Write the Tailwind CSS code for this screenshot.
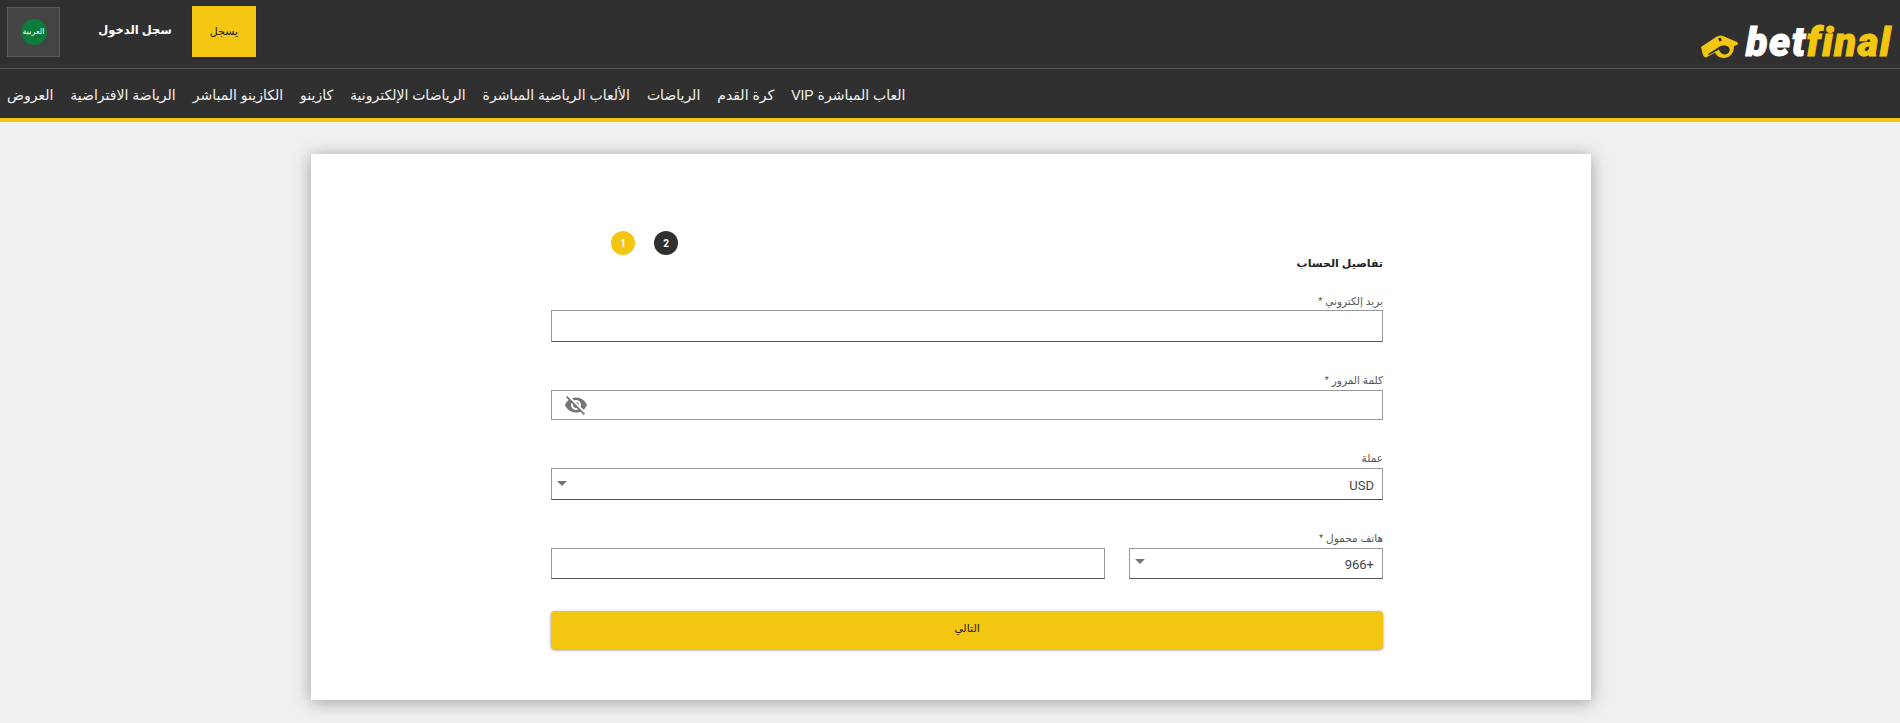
<!DOCTYPE html>
<html lang="ar" dir="rtl">
  <head>
    <meta charset="UTF-8" />
    <title>betfinal</title>
    <script src="https://cdn.jsdelivr.net/npm/@tailwindcss/browser@4"></script>
  </head>
  <body class="bg-[#f0f0f0] h-[723px] overflow-hidden font-['Liberation_Sans','DejaVu_Sans',sans-serif] text-[#333]">
    <!-- Top bar -->
    <header class="bg-[#303030] border-b-4 border-[#f3c611]">
      <div class="h-[69px] flex justify-between pr-[8px] pl-[7px] border-b border-[#555]">
        <div dir="ltr" class="flex items-center gap-[7px] pt-[18px]">
          <svg viewBox="0 0 38 25" class="w-[38px] h-[25px] mt-[6px]">
            <path fill="#f3c611" d="M0 13 15 3Q19 .5 22 2L36 8Q38 10 36 11L33 12C33 20 28 24 23 24 18 24 15 21 14 18.500L6 23Q3 24 2 21Z" />
            <path fill="#303030" d="M7 20 18 13C21 11 26 11 28 13.500 30 16.500 27.500 20.500 24 20.500 21 20.500 18.500 18 18 15.500L8 21ZM17 4.500 19.500 3.500 21 6.500 18.500 7.500Z" />
          </svg>
          <span class="text-[40px] leading-none font-black italic tracking-[1.500px] [-webkit-text-stroke:1px] font-['Roboto',sans-serif] text-white">bet<span class="text-[#f3c611]">final</span></span>
        </div>
        <div class="flex items-start pt-[6px]">
          <a href="#" class="w-[64px] h-[51px] bg-[#f3c611] flex items-center justify-center text-[11px] text-[#222] shadow-sm">يسجل</a>
          <a href="#" class="w-[132px] h-[49px] pl-[18px] flex items-center justify-center text-[11.500px] font-bold text-white">سجل الدخول</a>
          <div class="w-[53px] h-[50px] mt-[1px] bg-[#444] border border-[#5a5a5a] flex items-center justify-center">
            <span class="w-[26px] h-[26px] rounded-full bg-[#0b7a3b] flex items-center justify-center text-[8px] text-white">العربية</span>
          </div>
        </div>
      </div>
      <nav class="h-[49px] pt-[3px] flex items-center justify-end gap-[17px] pl-[7px] text-[14px] text-[#f2f2f2]">
        <a href="#">العاب المباشرة VIP</a>
        <a href="#">كرة القدم</a>
        <a href="#">الرياضات</a>
        <a href="#">الألعاب الرياضية المباشرة</a>
        <a href="#">الرياضات الإلكترونية</a>
        <a href="#">كازينو</a>
        <a href="#">الكازينو المباشر</a>
        <a href="#">الرياضة الافتراضية</a>
        <a href="#">العروض</a>
      </nav>
    </header>

    <main class="flex justify-center pt-[32px] pl-[2px]">
      <section class="w-[1280px] h-[546px] bg-white shadow-[0_2px_16px_rgba(0,0,0,0.35)] pr-[208px]">
        <form class="w-[832px] pt-[77px]">
          <!-- Steps -->
          <div class="flex justify-end gap-[19px] pl-[60px]">
            <span class="w-[24px] h-[24px] rounded-full bg-[#303030] text-white text-[10px] font-bold flex items-center justify-center font-['Roboto',sans-serif]">2</span>
            <span class="w-[24px] h-[24px] rounded-full bg-[#f3c611] text-white text-[10px] font-bold flex items-center justify-center font-['Roboto',sans-serif]">1</span>
          </div>
          <h2 class="text-[11px] font-bold leading-[16px] text-[#222]">تفاصيل الحساب</h2>

          <label class="block mt-[24px] text-[10.500px] leading-[12px] text-[#555]">بريد إلكتروني *</label>
          <div class="mt-[3px] h-[32px] border border-[#999] border-b-[#555]"></div>

          <label class="block mt-[32px] text-[10.500px] leading-[12px] text-[#555]">كلمة المرور *</label>
          <div class="mt-[4px] h-[30px] border border-[#999] flex items-center justify-end pl-[12px]">
            <svg viewBox="0 0 24 24" class="w-[24px] h-[24px] fill-[#757575]"><path d="M12 7c2.76 0 5 2.24 5 5 0 .65-.13 1.26-.36 1.83l2.92 2.92c1.51-1.26 2.7-2.89 3.43-4.75-1.73-4.39-6-7.500-11-7.500-1.400 0-2.740.25-3.980.7l2.160 2.160C10.740 7.130 11.350 7 12 7zM2 4.270l2.280 2.280.46.46C3.080 8.300 1.780 10.020 1 12c1.730 4.390 6 7.500 11 7.500 1.550 0 3.030-.3 4.380-.84l.42.42L19.730 22 21 20.730 3.270 3 2 4.270zM7.530 9.800l1.550 1.550c-.05.21-.08.43-.08.65 0 1.660 1.340 3 3 3 .22 0 .44-.03.65-.08l1.550 1.550c-.67.33-1.410.53-2.200.53-2.760 0-5-2.240-5-5 0-.79.2-1.530.53-2.200zm4.310-.78l3.150 3.150.02-.16c0-1.660-1.340-3-3-3l-.17.01z" /></svg>
          </div>

          <label class="block mt-[32px] text-[10.500px] leading-[12px] text-[#555]">عملة</label>
          <div class="mt-[4px] h-[32px] border border-[#999] border-b-[#555] flex items-center justify-between pr-[8px] pl-[5px] text-[13px] text-[#444] font-['Roboto',sans-serif]">
            <span class="pt-[3px]">USD</span>
            <span class="w-0 h-0 mb-[2px] border-x-[5px] border-x-transparent border-t-[5px] border-t-[#757575]"></span>
          </div>

          <label class="block mt-[32px] text-[10.500px] leading-[12px] text-[#555]">هاتف محمول *</label>
          <div class="mt-[4px] flex gap-[24px]">
            <div class="w-[254px] h-[31px] border border-[#999] border-b-[#555] flex items-center justify-between pr-[8px] pl-[5px] text-[13px] text-[#444] font-['Roboto',sans-serif]">
              <span class="pt-[2px]">+966</span>
              <span class="w-0 h-0 mb-[4px] border-x-[5px] border-x-transparent border-t-[5px] border-t-[#757575]"></span>
            </div>
            <div class="flex-1 h-[31px] border border-[#999] border-b-[#555]"></div>
          </div>

          <button type="button" class="block w-full mt-[32px] h-[38px] pb-[4px] rounded-[4px] bg-[#f3c611] text-[11px] text-[#222] shadow-[0_1px_3px_rgba(0,0,0,0.45)]">التالي</button>
        </form>
      </section>
    </main>
  </body>
</html>
